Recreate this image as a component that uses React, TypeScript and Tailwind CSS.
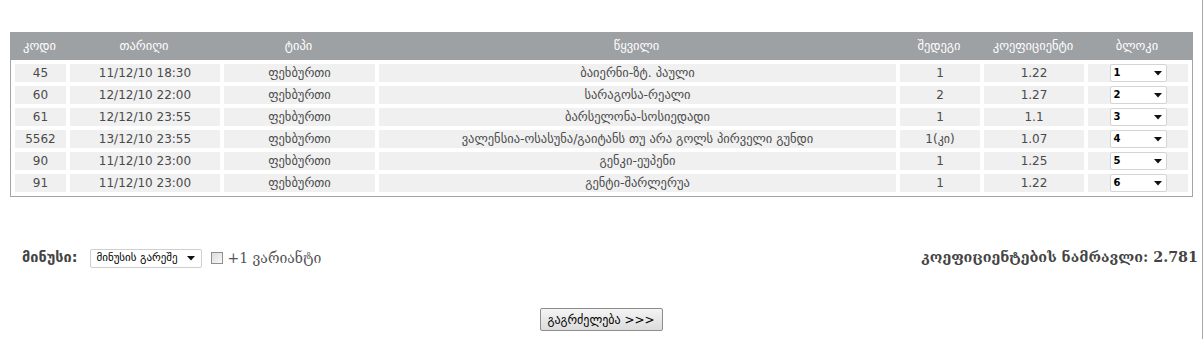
import React from 'react';

const cols = 'grid grid-cols-[51px_150px_151px_517px_80px_100px_100px] gap-x-1';

const rows = [
  { code: '45', date: '11/12/10 18:30', event: 'ბაიერნი-ზტ. პაული', res: '1', coef: '1.22', block: '1' },
  { code: '60', date: '12/12/10 22:00', event: 'სარაგოსა-რეალი', res: '2', coef: '1.27', block: '2' },
  { code: '61', date: '12/12/10 23:55', event: 'ბარსელონა-სოსიედადი', res: '1', coef: '1.1', block: '3' },
  { code: '5562', date: '13/12/10 23:55', event: 'ვალენსია-ოსასუნა/გაიტანს თუ არა გოლს პირველი გუნდი', res: '1(კი)', coef: '1.07', block: '4' },
  { code: '90', date: '11/12/10 23:00', event: 'გენკი-ეუპენი', res: '1', coef: '1.25', block: '5' },
  { code: '91', date: '11/12/10 23:00', event: 'გენტი-შარლერუა', res: '1', coef: '1.22', block: '6' },
];

const Arrow = () => (
  <svg width="8" height="5" viewBox="0 0 8 5" className="shrink-0">
    <path d="M0 0h8L4 4.5z" fill="#111" />
  </svg>
);

const Cell: React.FC<{ children: React.ReactNode }> = ({ children }) => (
  <div className="h-[18px] bg-[#f0f0f0] flex items-center justify-center leading-none">{children}</div>
);

export default function App() {
  return (
    <div
      className="w-[1203px] h-[339px] border-r border-[#a9a9a9] bg-white text-[#4a4a4a] text-[12px] pt-[32px]"
      style={{ fontFamily: '"DejaVu Sans", Verdana, sans-serif' }}
    >
      <div className="ml-[10px] w-[1183px] border border-[#a3a6a9] border-t-0">
        <div className={`${cols} h-[28px] bg-[#9da1a4] text-white text-[12.5px] items-center text-center px-1 -mx-px w-[1183px]`}>
          <div>კოდი</div>
          <div>თარიღი</div>
          <div>ტიპი</div>
          <div>წყვილი</div>
          <div>შედეგი</div>
          <div>კოეფიციენტი</div>
          <div>ბლოკი</div>
        </div>
        <div className="flex flex-col gap-1 p-1 pt-1">
          {rows.map((r) => (
            <div key={r.code} className={cols}>
              <Cell>{r.code}</Cell>
              <Cell>{r.date}</Cell>
              <Cell><span className="text-[12.5px]">ფეხბურთი</span></Cell>
              <Cell><span className="text-[12.5px]">{r.event}</span></Cell>
              <Cell>{r.res}</Cell>
              <Cell>{r.coef}</Cell>
              <Cell>
                <div className="w-[57px] h-[18px] bg-white border border-[#d4d4d4] rounded-[2px] flex items-center justify-between pl-[3px] pr-[4px] text-black text-[10px] font-semibold">
                  <span>{r.block}</span>
                  <Arrow />
                </div>
              </Cell>
            </div>
          ))}
        </div>
      </div>

      <div className="flex items-center justify-between pl-[22px] pr-[4px] mt-[51px] h-[20px]">
        <div className="flex items-center">
          <span className="font-bold text-[14.5px] text-[#444]">მინუსი:</span>
          <div className="ml-[13px] w-[112px] h-[19px] bg-white border border-[#cfcfcf] rounded-[2px] flex items-center justify-between pl-[5px] pr-[6px] text-black text-[11px]">
            <span>მინუსის გარეშე</span>
            <Arrow />
          </div>
          <div className="ml-[9px] w-[12px] h-[12px] border border-[#8f8f8f] bg-gradient-to-br from-[#dcdcdc] to-[#f8f8f8]" />
          <span
            className="ml-[4px] text-[14px] text-[#555]"
            style={{ fontFamily: '"DejaVu Serif", serif' }}
          >
            +1 ვარიანტი
          </span>
        </div>
        <span
          className="font-bold text-[14.3px] text-[#444]"
          style={{ fontFamily: '"DejaVu Serif", serif' }}
        >
          კოეფიციენტების ნამრავლი: 2.781
        </span>
      </div>

      <div className="flex justify-center mt-[40px]">
        <div className="w-[123px] h-[23px] border border-[#8d8d8d] rounded-[2px] bg-gradient-to-b from-[#f4f4f4] to-[#dcdcdc] flex items-center justify-center text-[12px] text-black">
          გაგრძელება &gt;&gt;&gt;
        </div>
      </div>
    </div>
  );
}
